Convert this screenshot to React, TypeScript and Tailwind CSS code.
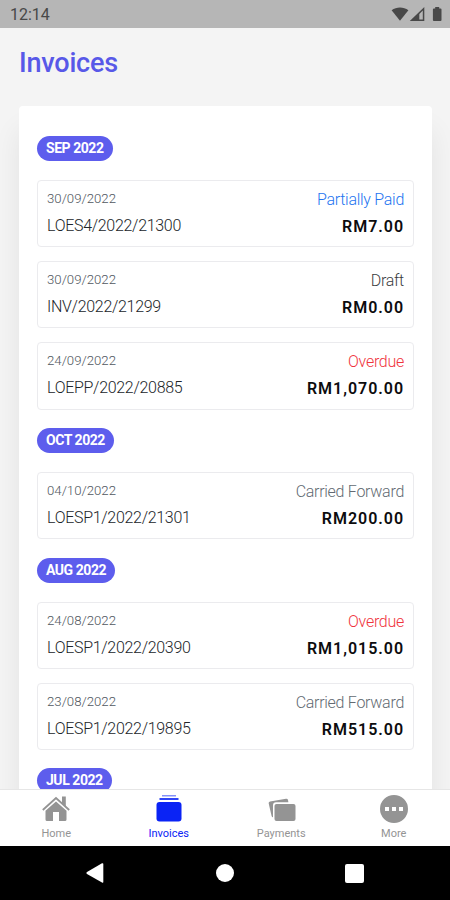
import type { ReactNode } from "react";
import clsx from "clsx";

type Status = "Partially Paid" | "Draft" | "Overdue" | "Carried Forward";

type Invoice = {
  date: string;
  number: string;
  status: Status;
  amount: string;
};

const statusColors: Record<Status, string> = {
  "Partially Paid": "text-[#2374f0]",
  Draft: "text-[#3a3c40]",
  Overdue: "text-[#f0343c]",
  "Carried Forward": "text-[#626a72]",
};

const groups: { month: string; invoices: Invoice[] }[] = [
  {
    month: "SEP 2022",
    invoices: [
      { date: "30/09/2022", number: "LOES4/2022/21300", status: "Partially Paid", amount: "RM7.00" },
      { date: "30/09/2022", number: "INV/2022/21299", status: "Draft", amount: "RM0.00" },
      { date: "24/09/2022", number: "LOEPP/2022/20885", status: "Overdue", amount: "RM1,070.00" },
    ],
  },
  {
    month: "OCT 2022",
    invoices: [
      { date: "04/10/2022", number: "LOESP1/2022/21301", status: "Carried Forward", amount: "RM200.00" },
    ],
  },
  {
    month: "AUG 2022",
    invoices: [
      { date: "24/08/2022", number: "LOESP1/2022/20390", status: "Overdue", amount: "RM1,015.00" },
      { date: "23/08/2022", number: "LOESP1/2022/19895", status: "Carried Forward", amount: "RM515.00" },
    ],
  },
  { month: "JUL 2022", invoices: [] },
];

function StatusBar() {
  return (
    <div className="flex h-7 shrink-0 items-center justify-between bg-[#b6b6b6] pl-[10px] pr-2 text-[#484848]">
      <span className="pt-[2px] text-[16px] leading-none">12:14</span>
      <svg width="52" height="16" viewBox="0 0 52 16" fill="currentColor">
        <path d="M1.600 4.200C6.500.6 13.500.6 18.400 4.200L10 14.800Z" />
        <path d="M34.300 1V15H19.800ZM32.800 4.500L29.300 8V13.400H32.800Z" fillRule="evenodd" />
        <path d="M45.200 1h4v1.500h1.300q1 0 1 1V14q0 1-1 1h-6.600q-1 0-1-1V3.500q0-1 1-1H45.200Z" />
      </svg>
    </div>
  );
}

function InvoiceCard({ invoice }: { invoice: Invoice }) {
  return (
    <div className="flex h-[67.200px] justify-between rounded-[4px] border-[1.500px] border-[#ebebee] px-[9px]">
      <div className="flex flex-col">
        <span className="mt-[10px] text-[13.200px] font-light leading-4 text-[#50575e]">{invoice.date}</span>
        <span className="mt-[9px] text-[16px] font-light leading-5 tracking-[-0.300px] text-[#212529]">
          {invoice.number}
        </span>
      </div>
      <div className="flex flex-col items-end">
        <span
          className={clsx("mt-[9px] text-[16px] font-light leading-5 tracking-[-0.280px]", statusColors[invoice.status])}
        >
          {invoice.status}
        </span>
        <span className="mt-[7px] text-[16px] font-semibold leading-5 tracking-[0.970px] text-[#0c0c0e]">
          {invoice.amount}
        </span>
      </div>
    </div>
  );
}

function Tab({ label, active, children }: { label: string; active?: boolean; children: ReactNode }) {
  return (
    <button
      type="button"
      className={clsx("flex flex-1 flex-col items-center pt-[4px]", active ? "text-[#0a23f5]" : "text-[#949494]")}
    >
      <svg width="30" height="30" viewBox="0 0 30 30" fill="currentColor">
        {children}
      </svg>
      <span className="mt-[3px] text-[11px] leading-[14px]">{label}</span>
    </button>
  );
}

function TabBar() {
  return (
    <nav className="flex h-[57px] shrink-0 border-t border-[#e6e6e6] bg-white">
      <Tab label="Home">
        <path d="M15 7.500L25.500 16.800V25.500q0 1.500-1.500 1.500H18V18H12V27H6q-1.500 0-1.500-1.500V16.800Z" />
        <path d="M1.800 16L15 4L28.200 16" fill="none" stroke="currentColor" strokeWidth="1.800" />
        <path d="M21 2.500h3.800v10L21 9Z" />
      </Tab>
      <Tab label="Invoices" active>
        <rect x="8" y="1" width="14" height="1.500" opacity=".5" />
        <rect x="5.500" y="4" width="19" height="2" opacity=".85" />
        <rect x="2.500" y="8" width="25" height="19.500" rx="3" />
      </Tab>
      <Tab label="Payments">
        <path d="M4 7.500L20 4.700q1.700-.2 2 1.300l.4 2.300H10q-3 0-3 3V23.300q-1.200 0-1.400-1.200L2.700 9.500q-.3-1.700 1.300-2Z" />
        <rect x="8.500" y="10" width="21" height="17" rx="2" />
      </Tab>
      <Tab label="More">
        <path
          fillRule="evenodd"
          d="M15 1A14 14 0 1 0 15 29A14 14 0 1 0 15 1ZM6 13h4v4H6ZM13 13h4v4h-4ZM20 13h4v4h-4Z"
        />
      </Tab>
    </nav>
  );
}

function SystemNav() {
  return (
    <div className="flex h-[54px] shrink-0 items-center justify-around bg-black px-[30px] text-white">
      <svg width="18" height="20" viewBox="0 0 18 20" fill="currentColor">
        <path d="M16 .3Q17.300-.2 17.300 1V19Q17.300 20.200 16 19.500L1 11Q-.2 10 1 9Z" />
      </svg>
      <span className="ml-[1px] size-[18px] rounded-full bg-white" />
      <span className="size-[19px] rounded-[2px] bg-white" />
    </div>
  );
}

export default function App() {
  return (
    <div className="flex h-[900px] w-[450px] flex-col overflow-hidden bg-[#f4f4f4] font-['Roboto',sans-serif]">
      <StatusBar />
      <header className="h-[78px] shrink-0 pl-[19px] pt-[17px]">
        <h1 className="text-[27px] font-medium leading-9 tracking-[-0.200px] text-[#5858e8]">Invoices</h1>
      </header>
      <main className="min-h-0 flex-1 overflow-hidden">
        <div className="ml-[19px] mr-[18px] flex h-[900px] flex-col gap-[18.400px] rounded-[4px] bg-white px-[18px] pt-[30px] shadow-[0_24px_28px_rgba(0,0,0,0.075)]">
          {groups.map((group) => (
            <section key={group.month}>
              <div className="mb-[19px] flex">
                <h2 className="h-[25px] rounded-full bg-[#5d5ded] px-[9px] text-[14px] font-bold leading-[25px] tracking-[-0.450px] text-white">
                  {group.month}
                </h2>
              </div>
              <div className="flex flex-col gap-[14px]">
                {group.invoices.map((invoice) => (
                  <InvoiceCard key={invoice.number} invoice={invoice} />
                ))}
              </div>
            </section>
          ))}
        </div>
      </main>
      <TabBar />
      <SystemNav />
    </div>
  );
}
